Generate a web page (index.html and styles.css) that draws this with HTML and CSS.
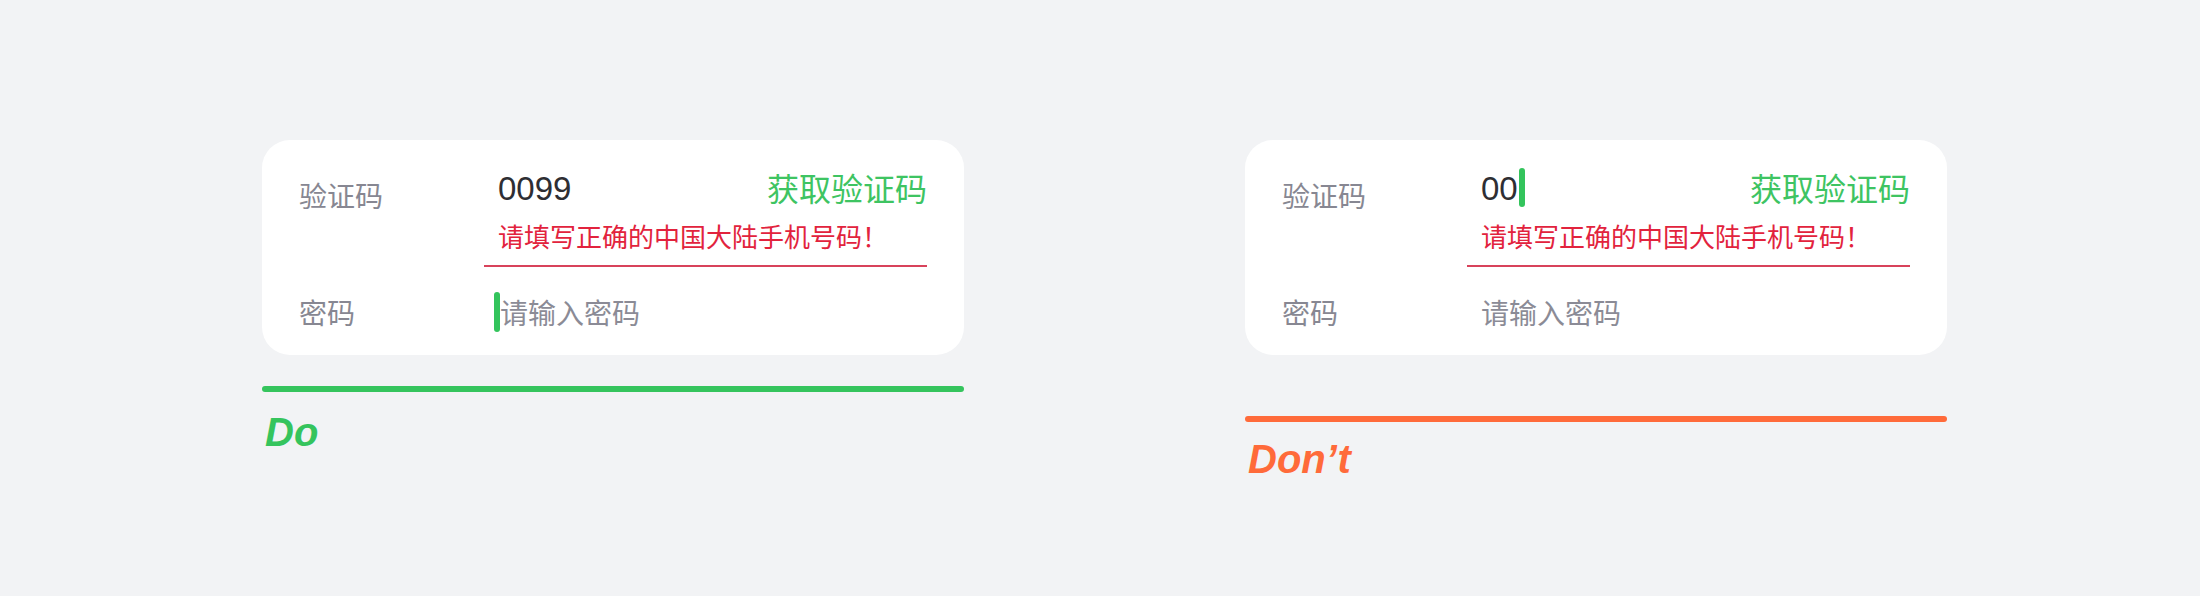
FILE: index.html
```html
<!DOCTYPE html>
<html lang="zh-CN">
<head>
<meta charset="utf-8">
<title>Do / Don't</title>
<link rel="stylesheet" href="styles.css">
</head>
<body>
<div class="page">
  <div class="example example--do">
    <div class="card">
      <div class="row row--code">
        <div class="label">验证码</div>
        <div class="field field--error">
          <div class="field-main">
            <span class="value">0099</span>
            <span class="action">获取验证码</span>
          </div>
          <div class="error">请填写正确的中国大陆手机号码！</div>
        </div>
      </div>
      <div class="row row--pwd">
        <div class="label">密码</div>
        <div class="field field--focus">
          <span class="cursor"></span><span class="placeholder">请输入密码</span>
        </div>
      </div>
    </div>
    <div class="bar"></div>
    <div class="verdict">Do</div>
  </div>

  <div class="example example--dont">
    <div class="card">
      <div class="row row--code">
        <div class="label">验证码</div>
        <div class="field field--error">
          <div class="field-main">
            <span class="value-wrap"><span class="value">00</span><span class="cursor cursor--inline"></span></span>
            <span class="action">获取验证码</span>
          </div>
          <div class="error">请填写正确的中国大陆手机号码！</div>
        </div>
      </div>
      <div class="row row--pwd">
        <div class="label">密码</div>
        <div class="field field--plain">
          <span class="placeholder">请输入密码</span>
        </div>
      </div>
    </div>
    <div class="bar"></div>
    <div class="verdict">Don’t</div>
  </div>
</div>
</body>
</html>
```

FILE: styles.css
```css
html, body {
  margin: 0;
  padding: 0;
}
body {
  background: #f2f3f5;
  width: 2200px;
  height: 596px;
  overflow: hidden;
  font-family: "Liberation Sans", "Noto Sans CJK SC", sans-serif;
}
.page {
  display: flex;
  align-items: flex-start;
  gap: 281px;
  padding: 140px 0 0 262px;
}
.example {
  width: 702px;
  display: flex;
  flex-direction: column;
}
.card {
  box-sizing: border-box;
  width: 702px;
  height: 215px;
  background: #ffffff;
  border-radius: 28px;
  padding: 27px 37px 0 37px;
  display: flex;
  flex-direction: column;
}
.row {
  display: grid;
  grid-template-columns: 185px 1fr;
}
.label {
  font-family: "Noto Sans CJK SC", sans-serif;
  font-size: 28px;
  line-height: 44px;
  color: #878792;
}
.row--code .label {
  padding-top: 6px;
}
.field--error {
  padding: 0 0 12px 14px;
  border-bottom: 2px solid #d8435b;
}
.field-main {
  height: 44px;
  display: flex;
  align-items: center;
  justify-content: space-between;
}
.value-wrap {
  display: flex;
  align-items: center;
}
.value {
  font-family: "Liberation Sans", sans-serif;
  font-size: 33px;
  line-height: 44px;
  color: #2e2e33;
}
.action {
  font-family: "Noto Sans CJK SC", sans-serif;
  font-size: 32px;
  line-height: 44px;
  color: #3ec462;
  margin-top: -5px;
}
.error {
  margin-top: 8px;
  font-family: "Noto Sans CJK SC", sans-serif;
  font-size: 26px;
  line-height: 34px;
  color: #e2233d;
}
.row--pwd {
  flex: 1;
  align-items: center;
}
.row--pwd .label {
  margin-top: 2px;
}
.field--focus,
.field--plain {
  display: flex;
  align-items: center;
  margin-top: 2px;
}
.field--focus {
  padding-left: 10px;
}
.field--plain {
  padding-left: 14px;
}
.placeholder {
  font-family: "Noto Sans CJK SC", sans-serif;
  font-size: 28px;
  line-height: 44px;
  color: #8b8b96;
}
.cursor {
  display: block;
  width: 6px;
  height: 40px;
  border-radius: 3px;
  background: #33c45c;
}
.cursor--inline {
  margin-left: 1px;
  height: 39px;
  margin-top: -3px;
}
.bar {
  height: 6px;
  border-radius: 3px;
}
.example--do .bar {
  margin-top: 31px;
  background: #35c45d;
}
.example--dont .bar {
  margin-top: 61px;
  background: #ff6a3a;
}
.verdict {
  font-family: "Liberation Sans", sans-serif;
  font-weight: 700;
  font-style: italic;
  font-size: 40px;
  line-height: 48px;
  padding-left: 3px;
}
.example--do .verdict {
  margin-top: 16px;
  color: #35c45d;
}
.example--dont .verdict {
  margin-top: 13px;
  color: #ff6a3a;
}
```
